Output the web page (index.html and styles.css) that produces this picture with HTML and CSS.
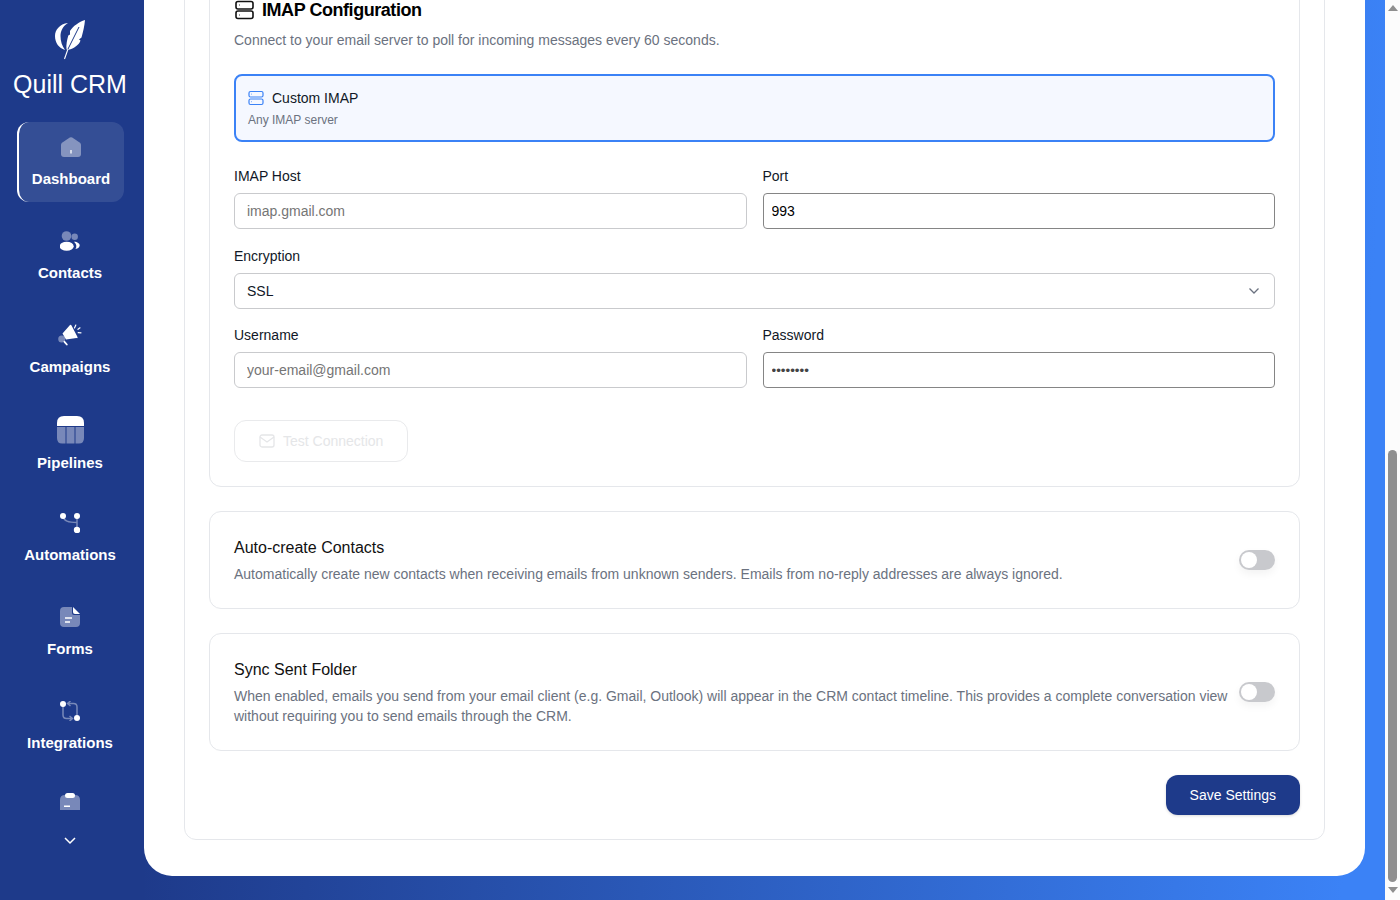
FILE: index.html
```html
<!DOCTYPE html>
<html lang="en">
<head>
<meta charset="utf-8">
<title>Quill CRM - Settings</title>
<link rel="stylesheet" href="styles.css">
</head>
<body>
<div class="app">

<div class="sidebar">
  <div class="brand">
    <svg class="brand-logo" width="34" height="42" viewBox="-1 0 34 42">
      <path fill="#fff" d="M31 1 C25 3 19 7 16 12 L16 15.500 L14.300 16.500 C13 21 12 26 12.500 30.500 L14.500 30.800 C20 29.500 25 26 26.500 21.500 L25 20.500 L27.500 18.500 C29 13 30.500 7 31 1 Z"/>
      <path fill="none" stroke="#1e3a8a" stroke-width="1" d="M25 8 L13.500 31"/>
      <path fill="none" stroke="#fff" stroke-width="1.100" d="M14 30 L10.500 40"/>
      <path fill="#fff" d="M14 4 C5.500 5 1 11 1 17 C1 24 5 29 11 31 C8 27 6.500 22 6.500 17 C6.500 12 9 7 14 4 Z"/>
    </svg>
    <div class="brand-name">Quill CRM</div>
  </div>

  <div class="nav">
    <a class="nav-item active">
      <span class="nav-icon">
        <svg width="20" height="20" viewBox="0 0 20 20"><path fill="#fff" opacity=".4" d="M8.800 .5 Q10 -.2 11.200 .5 L19 5.800 Q20 6.500 20 8 V17 Q20 20 17 20 H3 Q0 20 0 17 V8 Q0 6.500 1 5.800 Z"/><rect x="9.200" y="13" width="1.600" height="3.500" fill="#fff" opacity=".8"/></svg>
      </span>
      <span class="nav-label">Dashboard</span>
    </a>
    <a class="nav-item">
      <span class="nav-icon">
        <svg width="20" height="20" viewBox="0 0 20 20"><circle cx="6.500" cy="5" r="4.800" fill="#fff" opacity=".4"/><circle cx="14.700" cy="5.700" r="3.200" fill="#fff" opacity=".4"/><ellipse cx="6.700" cy="15.300" rx="7" ry="4.500" fill="#fff"/><path fill="#fff" d="M14 10.700 C17.500 10.700 19.700 12.500 19.700 14.500 C19.700 16 18 17.500 15.500 18 C17 15.500 16.500 13 14 10.700 Z"/></svg>
      </span>
      <span class="nav-label">Contacts</span>
    </a>
    <a class="nav-item">
      <span class="nav-icon">
        <svg width="24" height="22" viewBox="0 0 24 22"><circle cx="3.700" cy="15" r="3.500" fill="#fff" opacity=".4"/><path fill="#fff" d="M4.500 9.500 L12 1 Q13 .5 13.500 1.500 L19.500 13 Q20 14.500 18.500 14 L8 15.500 Z"/><path stroke="#fff" stroke-width="1.800" stroke-linecap="round" d="M6.500 17.800 L8.800 20.500"/><path stroke="#fff" stroke-width="1.200" stroke-linecap="round" fill="none" d="M16.500 4 L17.800 1 M20 5.300 L22 3.800 M20.200 8.700 L23 8.800"/></svg>
      </span>
      <span class="nav-label">Campaigns</span>
    </a>
    <a class="nav-item tall">
      <span class="nav-icon">
        <svg width="27" height="28" viewBox="0 0 27 28"><path fill="#fff" d="M0 10 V7 Q0 0 7 0 H20 Q27 0 27 7 V10 Z"/><path fill="#fff" opacity=".4" d="M0 11 H8.500 V27.500 H5 Q0 27.500 0 22 Z M9.500 11 H17.500 V27.500 H9.500 Z M18.500 11 H27 V22 Q27 27.500 22 27.500 H18.500 Z"/></svg>
      </span>
      <span class="nav-label">Pipelines</span>
    </a>
    <a class="nav-item">
      <span class="nav-icon">
        <svg width="20" height="20" viewBox="0 0 20 20"><path fill="none" stroke="#fff" stroke-width="1.500" opacity=".4" d="M3 3 C4 8 8 9.500 17 9.500 M17 3 V17"/><circle cx="3" cy="3" r="3" fill="#fff"/><circle cx="17" cy="3" r="3" fill="#fff"/><circle cx="17" cy="17" r="3.200" fill="#fff"/></svg>
      </span>
      <span class="nav-label">Automations</span>
    </a>
    <a class="nav-item">
      <span class="nav-icon">
        <svg width="20" height="20" viewBox="0 0 20 20"><path fill="#fff" opacity=".4" d="M4 0 H12 V6 Q12 8 14 8 H20 V16 Q20 20 16 20 H4 Q0 20 0 16 V4 Q0 0 4 0 Z"/><path fill="#fff" d="M13 0 L20 7 H15 Q13 7 13 5 Z"/><path stroke="#fff" stroke-width="1.500" d="M5 11 H12 M5 15 H10"/></svg>
      </span>
      <span class="nav-label">Forms</span>
    </a>
    <a class="nav-item">
      <span class="nav-icon">
        <svg width="20" height="20" viewBox="0 0 20 20"><g fill="none" stroke="#fff" stroke-width="1.500" opacity=".4"><path d="M3 3 V14 Q3 17.500 6.500 17.500 H12 M9.500 15 L12.500 17.500 L9.500 20"/><path d="M17 17 V6 Q17 2.500 13.500 2.500 H8 M10.500 0 L7.500 2.500 L10.500 5"/></g><circle cx="3" cy="3" r="3" fill="#fff"/><circle cx="17" cy="17" r="3" fill="#fff"/></svg>
      </span>
      <span class="nav-label">Integrations</span>
    </a>
    <a class="nav-item last">
      <span class="nav-icon">
        <svg width="20" height="20" viewBox="0 0 20 20"><path fill="#fff" opacity=".4" d="M0 20 V7 Q0 2 5 2 H15 Q20 2 20 7 V20 Z"/><rect x="5" y="0" width="10" height="5" rx="2.500" fill="#fff"/><rect x="4" y="12.500" width="6" height="1.500" fill="#fff"/></svg>
      </span>
    </a>
  </div>

  <div class="nav-more">
    <svg width="12" height="8" viewBox="0 0 12 8"><path fill="none" stroke="#fff" stroke-width="1.500" d="M1 1 L6 6 L11 1"/></svg>
  </div>
</div>

<div class="panel">
  <div class="panel-card">

    <div class="card">
      <h3 class="card-title">
        <svg width="20" height="20" viewBox="0 0 20 20" fill="none" stroke="#111" stroke-width="1.600"><rect x="2" y="1.500" width="17" height="7.500" rx="2"/><rect x="2" y="11" width="17" height="7.500" rx="2"/><path stroke-width="1" d="M5 5 H5.800 M5 15 H5.800"/></svg>
        IMAP Configuration
      </h3>
      <p class="card-desc">Connect to your email server to poll for incoming messages every 60 seconds.</p>

      <div class="provider">
        <div class="provider-name">
          <svg width="16" height="16" viewBox="0 0 16 16" fill="none" stroke="#3b82f6" stroke-width="1.200"><rect x="1" y="1.500" width="14" height="5.500" rx="1.500"/><rect x="1" y="9" width="14" height="5.500" rx="1.500"/><path d="M3.500 4.200 H4 M3.500 11.700 H4"/></svg>
          Custom IMAP
        </div>
        <div class="provider-sub">Any IMAP server</div>
      </div>

      <div class="form-row">
        <div class="field">
          <label>IMAP Host</label>
          <input class="input" type="text" placeholder="imap.gmail.com">
        </div>
        <div class="field">
          <label>Port</label>
          <input class="input plain" type="text" value="993">
        </div>
      </div>

      <div class="field">
        <label>Encryption</label>
        <div class="input select">
          SSL
          <svg width="10" height="6" viewBox="0 0 10 6"><path fill="none" stroke="#6b7280" stroke-width="1.300" d="M.5 .5 L5 5 L9.500 .5"/></svg>
        </div>
      </div>

      <div class="form-row">
        <div class="field">
          <label>Username</label>
          <input class="input" type="text" placeholder="your-email@gmail.com">
        </div>
        <div class="field">
          <label>Password</label>
          <input class="input plain secret" type="password" value="password">
        </div>
      </div>

      <button class="btn-test" disabled>
        <svg width="16" height="14" viewBox="0 0 16 14" fill="none" stroke="#e5e6e8" stroke-width="1.300"><rect x="1" y="1" width="14" height="12" rx="2"/><path d="M1 3 L8 8 L15 3"/></svg>
        Test Connection
      </button>
    </div>

    <div class="card toggle-card">
      <div class="toggle-text">
        <div class="toggle-title">Auto-create Contacts</div>
        <div class="toggle-desc">Automatically create new contacts when receiving emails from unknown senders. Emails from no-reply addresses are always ignored.</div>
      </div>
      <span class="toggle"></span>
    </div>

    <div class="card toggle-card">
      <div class="toggle-text">
        <div class="toggle-title">Sync Sent Folder</div>
        <div class="toggle-desc">When enabled, emails you send from your email client (e.g. Gmail, Outlook) will appear in the CRM contact timeline. This provides a complete conversation view without requiring you to send emails through the CRM.</div>
      </div>
      <span class="toggle"></span>
    </div>

    <div class="actions">
      <button class="btn-save">Save Settings</button>
    </div>

  </div>
</div>

</div>

<div class="scrollbar">
  <span class="arrow up"></span>
  <div class="track"><div class="thumb"></div></div>
  <span class="arrow down"></span>
</div>
</body>
</html>
```

FILE: styles.css
```css
/* Quill CRM settings page */

html, body
{ margin: 0;
height: 100%;
overflow: hidden;
}

body
{ display: flex;
font-family: "Liberation Sans", Arial, sans-serif;
font-size: 14px;
color: #111827;
background-color: #fcfcfc;
}

.app
{ flex: 1;
display: flex;
height: 900px;
min-width: 0;
background: linear-gradient(93deg, #1e3a8a 13%, #3b82f6 97%);
}

/* Sidebar */

.sidebar
{ width: 144px;
flex-shrink: 0;
display: flex;
flex-direction: column;
background-color: #1e3a8a;
color: #fff;
}

.brand
{ height: 122px;
padding: 19px 4px 0 0;
box-sizing: border-box;
text-align: center;
}

.brand-logo
{ display: block;
margin: 0 auto;
}

.brand-name
{ margin-top: 7px;
font-size: 25px;
line-height: 32px;
}

.nav
{ height: 688px;
overflow: hidden;
padding: 0 20px 0 17px;
}

.nav-item
{ display: block;
height: 80px;
margin-bottom: 14px;
padding: 15px 1px 0 0;
box-sizing: border-box;
text-align: center;
border-radius: 12px;
}

.nav-item.active
{ background-color: rgba(255, 255, 255, 0.1);
border-left: 2px solid #fff;
}

.nav-item.tall .nav-icon
{ height: 22px;
}

.nav-item.last
{ padding-top: 13px;
}

.nav-icon
{ display: flex;
justify-content: center;
align-items: center;
height: 20px;
}

.nav-icon svg
{ flex-shrink: 0;
}

.nav-label
{ display: block;
margin-top: 13px;
font-size: 15px;
line-height: 18px;
font-weight: bold;
}

.nav-more
{ padding: 27px 4px 0 0;
text-align: center;
line-height: 0;
}

/* Main panel */

.panel
{ flex: 1;
min-width: 0;
height: 876px;
margin-right: 20px;
display: flex;
flex-direction: column;
justify-content: flex-end;
overflow: hidden;
padding: 0 40px 36px;
box-sizing: border-box;
background-color: #fff;
border-radius: 0 0 28px 28px;
}

.panel-card
{ flex-shrink: 0;
display: flex;
flex-direction: column;
gap: 24px;
padding: 24px;
background-color: #fff;
border: 1px solid #e5e7eb;
border-radius: 12px;
}

.card
{ padding: 24px;
border: 1px solid #e5e7eb;
border-radius: 12px;
}

.card-title
{ display: flex;
align-items: center;
gap: 8px;
margin: 0;
font-size: 18px;
line-height: 24px;
letter-spacing: -0.45px;
color: #000;
}

.card-desc
{ margin: 8px 0 24px;
line-height: 20px;
color: #6b7280;
}

.provider
{ padding: 12px;
height: 68px;
box-sizing: border-box;
margin-bottom: 26px;
border: 2px solid #3b82f6;
border-radius: 8px;
background-color: #f5f8ff;
}

.provider-name
{ display: flex;
align-items: center;
gap: 8px;
line-height: 20px;
}

.provider-sub
{ margin-top: 3px;
font-size: 12px;
line-height: 18px;
color: #6b7280;
}

.form-row
{ display: grid;
grid-template-columns: 1fr 1fr;
gap: 16px;
}

.field
{ margin-bottom: 18.5px;
}

.form-row + .btn-test
{ margin-top: 13.5px;
}

.field label
{ display: block;
margin-bottom: 8px;
line-height: 17px;
}

.input
{ display: block;
width: 100%;
height: 36px;
box-sizing: border-box;
padding: 0 12px;
font-family: inherit;
font-size: 14px;
color: #111827;
background-color: #fff;
border: 1px solid #c9cacd;
border-radius: 6px;
}

.input::placeholder
{ color: #757575;
}

.input.plain
{ padding: 0 8px;
color: #000;
border-color: #858585;
border-radius: 4px;
}

.input.secret
{ font-size: 13.33px;
color: #444;
}

.select
{ display: flex;
justify-content: space-between;
align-items: center;
padding-right: 15px;
}

.btn-test
{ display: flex;
align-items: center;
gap: 8px;
height: 42px;
padding: 0 24px;
font-family: inherit;
font-size: 14px;
color: #e5e6e8;
background-color: #fff;
border: 1px solid #e9eaec;
border-radius: 12px;
}

/* Toggle cards */

.toggle-card
{ display: flex;
align-items: center;
gap: 8px;
}

.toggle-text
{ flex: 1;
min-width: 0;
}

.toggle-title
{ margin-bottom: 4px;
font-size: 16px;
line-height: 24px;
color: #111;
}

.toggle-desc
{ line-height: 20px;
color: #6b7280;
}

.toggle
{ position: relative;
flex-shrink: 0;
width: 36px;
height: 20px;
border-radius: 10px;
background-color: #c8c9cd;
box-shadow: 0 4px 8px rgba(0, 0, 0, 0.05);
}

.toggle::after
{ content: "";
position: absolute;
top: 2px;
left: 2px;
width: 16px;
height: 16px;
border-radius: 50%;
background-color: #fff;
}

.actions
{ display: flex;
justify-content: flex-end;
}

.btn-save
{ height: 40px;
padding: 0 24px;
font-family: inherit;
font-size: 14px;
color: #fff;
background-color: #1e3a8a;
border: 0;
border-radius: 12px;
box-shadow: 0 1px 3px rgba(0, 0, 0, 0.15);
}

/* Page scrollbar */

.scrollbar
{ width: 15px;
flex-shrink: 0;
display: flex;
flex-direction: column;
align-items: center;
height: 900px;
background-color: #fcfcfc;
}

.arrow
{ flex-shrink: 0;
width: 0;
height: 0;
border-left: 5px solid transparent;
border-right: 5px solid transparent;
}

.arrow.up
{ margin-top: 5px;
border-bottom: 6px solid #8f8f8f;
}

.arrow.down
{ margin-bottom: 7px;
border-top: 6px solid #8f8f8f;
}

.track
{ flex: 1;
width: 9px;
padding-bottom: 5px;
box-sizing: border-box;
display: flex;
flex-direction: column;
justify-content: flex-end;
}

.thumb
{ height: 432px;
background-color: #8f8f8f;
border-radius: 5px;
}
```
